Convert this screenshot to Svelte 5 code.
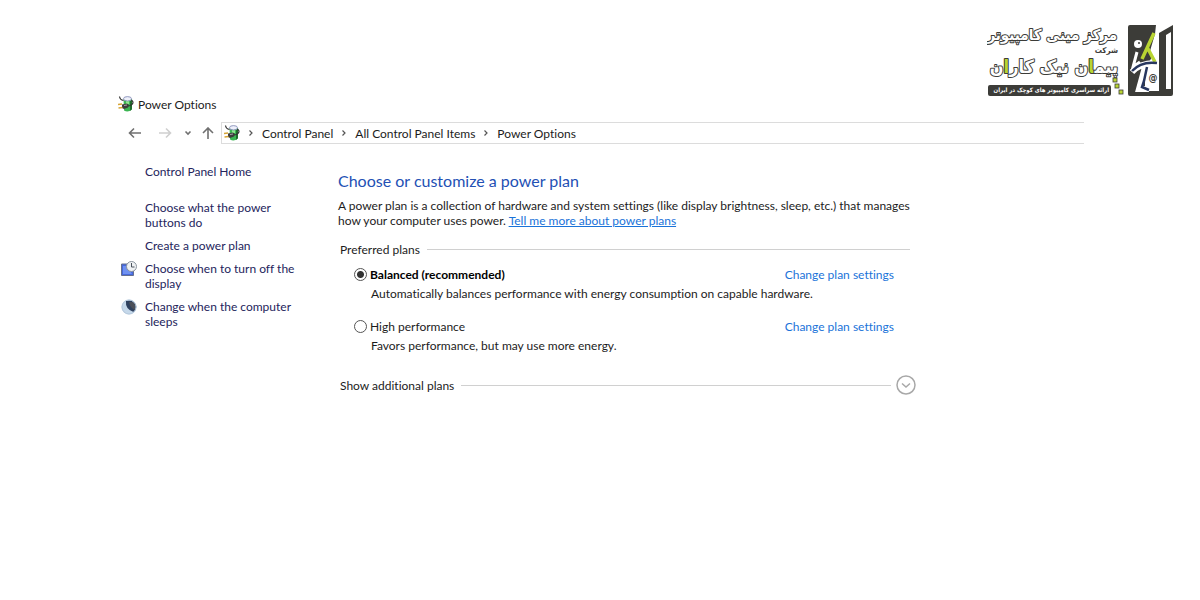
<script lang="ts">
  interface Task {
    label: string;
    icon?: "display" | "sleep";
  }

  const path = ["Control Panel", "All Control Panel Items", "Power Options"];

  const tasks: Task[] = [
    { label: "Choose what the power buttons do" },
    { label: "Create a power plan" },
    { label: "Choose when to turn off the display", icon: "display" },
    { label: "Change when the computer sleeps", icon: "sleep" },
  ];

  const plans = [
    {
      id: "balanced",
      name: "Balanced (recommended)",
      info: "Automatically balances performance with energy consumption on capable hardware.",
    },
    {
      id: "high",
      name: "High performance",
      info: "Favors performance, but may use more energy.",
    },
  ];

  let selected = $state("balanced");
</script>

{#snippet powerIcon()}
  <svg class="power-icon" viewBox="0 0 16 16" aria-hidden="true">
    <path d="M5.5 3 H14 V13.5 Q10 17 6 14.5 Z" fill="#3cb552" />
    <path d="M12 5 L14 4 V13 L12 15 Z" fill="#1f6d2c" />
    <path d="M8 5 H11 V8 H8 Z" fill="#8be88a" />
    <ellipse cx="9.5" cy="2.8" rx="4" ry="2.2" fill="#eef0fa" stroke="#7a83b0" stroke-width=".8" />
    <path d="M1.5 .5 Q2 4 5.5 4.5 M13.5 4 Q17 7 12.5 9.5 L10 10" fill="none" stroke="#333" stroke-width="1.2" />
    <path d="M4 8.5 L9 7.5 L11 9 L10 11.5 L6 13 L4 12 Z" fill="#3c3c3c" />
    <path d="M6 9.5 L9 9" stroke="#a5a5a5" />
    <path d="M0 8.5 L4 8 M.5 12 L4.5 11.5" stroke="#d6a536" stroke-width="1.6" />
  </svg>
{/snippet}

{#snippet chevron()}
  <svg class="chevron" viewBox="0 0 6 8" aria-hidden="true">
    <path d="M1.5 1.5 L4 4 L1.5 6.5" />
  </svg>
{/snippet}

<header>
  <a class="brand" href="/" aria-label="مرکز مینی کامپیوتر">
    <svg viewBox="0 0 186 71" direction="rtl">
      <g class="outlined">
        <text class="top" x="130" y="15">مرکز مینی کامپیوتر</text>
        <text class="name" x="131" y="48">پیم<tspan class="lime">ا</tspan>ن نیک کار<tspan class="lime">ا</tspan>ن</text>
      </g>
      <text class="company" x="131" y="28">شرکت</text>
      <rect x="1" y="60" width="123" height="11" rx="2" fill="#3c3c38" />
      <text class="tagline" x="122" y="67">ارائه سراسری کامپیوتر های کوچک در ایران</text>
      <g fill="#b9d532" stroke="#3c3c38" stroke-width=".8">
        <rect x="126" y="53" width="4" height="4" />
        <rect x="128" y="59" width="4" height="4" />
        <rect x="132" y="65" width="4" height="4" />
      </g>
      <path d="M143 0 H169 V7 L172 10 V8 L186 0 V69 Q186 71 184 71 H143 Q141 71 141 69 V2 Q141 0 143 0 Z" fill="#3c3c38" />
      <path d="M169 0 H172 V66 H158 V44 L165 32 L163 26 L168 9 Z" fill="#fff" />
      <path d="M179 10 L184 7 V64 H179 Z" fill="#fff" />
      <circle cx="151" cy="19" r="4" fill="#fff" />
      <circle cx="152" cy="18" r="1" fill="#3c3c38" />
      <path d="M150 27 L146 42 L153 37" fill="none" stroke="#fff" stroke-width="3" />
      <path d="M145 47 Q154 37 170 38 M158 42 L152 64 H162" fill="none" stroke="#fff" stroke-width="6" />
      <path d="M167 8 L155 34 M160 22 L168 37" fill="none" stroke="#b9d532" stroke-width="3.5" />
      <path d="M145 46 Q154 36 170 38 M160 42 L157 56 L155 62 L162 65" fill="none" stroke="#28375f" stroke-width="2.5" />
      <text class="at" x="166" y="56" direction="ltr">@</text>
    </svg>
  </a>
</header>

<main>
  <div class="title">
    {@render powerIcon()}
    <span>Power Options</span>
  </div>

  <nav class="toolbar" aria-label="Location">
    <button aria-label="Back">
      <svg viewBox="0 0 14 12"><path d="M13 6 H2 M6 1.5 L1.5 6 L6 10.5" /></svg>
    </button>
    <button class="disabled" aria-label="Forward" disabled>
      <svg viewBox="0 0 14 12"><path d="M1 6 H12 M8 1.5 L12.5 6 L8 10.5" /></svg>
    </button>
    <button class="recent" aria-label="Recent locations">
      <svg viewBox="0 0 8 12"><path d="M1.5 4.5 L4 7 L6.5 4.5" /></svg>
    </button>
    <button class="up" aria-label="Up">
      <svg viewBox="0 0 14 12"><path d="M7 12 V1.5 M2 6 L7 1 L12 6" /></svg>
    </button>
    <div class="address">
      {@render powerIcon()}
      {#each path as part}
        {@render chevron()}
        <a href="#{part}">{part}</a>
      {/each}
    </div>
  </nav>

  <div class="body">
    <aside>
      <a class="home" href="#home">Control Panel Home</a>
      <ul>
        {#each tasks as task}
          <li>
            {#if task.icon === "display"}
              <svg class="task-icon" viewBox="0 0 16 16" aria-hidden="true">
                <path d="M.5 3 H12.5 V14.5 H.5 Z" fill="#4668dc" stroke="#65708f" />
                <path d="M2 5 H6 L11 13 H2 Z" fill="#6f91f1" />
                <circle cx="10.5" cy="5.5" r="5" fill="#eef1f3" stroke="#8b949e" />
                <path d="M10.5 2 V6 H13.5" fill="none" stroke="#4b535d" />
              </svg>
            {:else if task.icon === "sleep"}
              <svg class="task-icon" viewBox="0 0 16 16" aria-hidden="true">
                <circle cx="8" cy="8" r="7.5" fill="#c5d8ea" />
                <path d="M5 2 Q4 10 12.5 13 Q16 10 15 6 Q12 0 5 2 Z" fill="#2e405e" />
                <path d="M8 3 Q9 9 14 11 Q15 5 12 3 Z" fill="#4b4f59" />
                <circle cx="8" cy="8" r="7" fill="none" stroke="#b5c8dc" />
              </svg>
            {/if}
            <a href="#task">{task.label}</a>
          </li>
        {/each}
      </ul>
    </aside>

    <section>
      <h1>Choose or customize a power plan</h1>
      <p>
        A power plan is a collection of hardware and system settings (like display brightness, sleep, etc.) that manages
        how your computer uses power. <a class="more" href="#more">Tell me more about power plans</a>
      </p>

      <fieldset>
        <legend><span>Preferred plans</span></legend>
        {#each plans as plan}
          <div class="plan">
            <input type="radio" id={plan.id} value={plan.id} bind:group={selected} />
            <label for={plan.id} class:selected={selected === plan.id}>{plan.name}</label>
            <a href="#{plan.id}">Change plan settings</a>
            <p>{plan.info}</p>
          </div>
        {/each}
      </fieldset>

      <button class="additional">
        <span>Show additional plans</span>
        <svg viewBox="0 0 20 20" aria-hidden="true">
          <circle cx="10" cy="10" r="9" />
          <path d="M6 8.5 L10 12 L14 8.5" />
        </svg>
      </button>
    </section>
  </div>
</main>

<style>
  :global(body) {
    margin: 0;
    background: #fff;
    color: #1c1c1c;
    font: 12px/15px "Segoe UI", Lato, "Open Sans", sans-serif;
    font-variant-ligatures: none;
  }

  a {
    color: inherit;
    text-decoration: none;
  }

  a:hover {
    text-decoration: underline;
  }

  button {
    padding: 0;
    border: 0;
    background: none;
    color: inherit;
    font: inherit;
    cursor: pointer;
  }

  svg {
    display: block;
    flex: none;
  }

  header {
    display: flex;
    justify-content: flex-end;
    padding: 25px 27px 0 0;
  }

  .brand svg {
    width: 186px;
    height: 71px;
  }

  .brand text {
    font-family: "DejaVu Sans Condensed", "DejaVu Sans", sans-serif;
    font-weight: bold;
    fill: #3c3c38;
  }

  .outlined text {
    fill: #fff;
    stroke: #3c3c38;
    stroke-width: 2px;
    stroke-linejoin: round;
    paint-order: stroke;
  }

  .outlined .lime {
    fill: #b9d532;
  }

  .brand .top {
    font-size: 15px;
  }

  .brand .name {
    font-size: 18px;
  }

  .brand .company {
    font-size: 8px;
  }

  .brand .tagline {
    font-size: 6px;
    fill: #fff;
  }

  .brand .at {
    font-size: 10px;
    text-anchor: middle;
  }

  main {
    padding: 0 116px 0 118px;
  }

  .title {
    display: flex;
    align-items: center;
    gap: 4px;
  }

  .power-icon {
    width: 16px;
    height: 16px;
  }

  .toolbar {
    display: flex;
    align-items: center;
    margin-top: 10px;
    padding-left: 10px;
  }

  .toolbar button {
    margin-right: 16px;
  }

  .toolbar button svg {
    width: 14px;
    height: 12px;
    fill: none;
    stroke: #707070;
    stroke-width: 1.6;
  }

  .toolbar .disabled svg {
    stroke: #cfcfcf;
  }

  .toolbar .recent {
    margin-right: 9px;
    margin-left: -4px;
  }

  .toolbar .recent svg {
    width: 8px;
  }

  .toolbar .up {
    margin-right: 6px;
  }

  .address {
    flex: 1;
    display: flex;
    align-items: center;
    height: 20px;
    padding-left: 2px;
    border: 1px solid #dcdcdc;
    border-right: 0;
  }

  .chevron {
    width: 6px;
    height: 8px;
    margin: 0 8px;
    fill: none;
    stroke: #555;
    stroke-width: 1.2;
  }

  .body {
    display: flex;
    margin-top: 20px;
  }

  aside {
    width: 193px;
    margin-right: 27px;
    color: #24245c;
  }

  .home {
    padding-left: 27px;
  }

  ul {
    display: grid;
    gap: 8px;
    margin: 21px 0 0;
    padding: 0;
    list-style: none;
  }

  li {
    position: relative;
    padding: 0 16px 0 27px;
  }

  .task-icon {
    position: absolute;
    left: 3px;
    top: 0;
    width: 16px;
    height: 16px;
  }

  section {
    flex: 1;
    max-width: 578px;
  }

  h1 {
    margin: 7px 0;
    color: #2350b4;
    font-size: 16px;
    font-weight: normal;
    line-height: 20px;
  }

  p {
    margin: 0;
  }

  .more {
    color: #1a73d9;
    text-decoration: underline;
  }

  fieldset {
    margin: 14px 6px 0 2px;
    padding: 0;
    border: 0;
  }

  legend {
    display: flex;
    align-items: center;
    gap: 7px;
    width: 100%;
    padding: 0;
  }

  legend::after,
  .additional span::after {
    content: "";
    flex: 1;
    height: 1px;
    background: #d0d0d0;
  }

  .plan {
    display: grid;
    grid-template-columns: 13px 1fr auto;
    align-items: center;
    gap: 4px 3px;
    margin-top: 10px;
    padding: 0 16px 8px 14px;
  }

  .plan input {
    appearance: none;
    width: 13px;
    height: 13px;
    margin: 0;
    border: 1px solid #555;
    border-radius: 50%;
  }

  .plan input:checked {
    background: radial-gradient(circle, #333 3px, #fff 4px);
  }

  .plan label.selected {
    color: #000;
    font-weight: bold;
  }

  .plan a {
    color: #1a73d9;
  }

  .plan p {
    grid-column: 2 / -1;
    padding-left: 1px;
  }

  .additional {
    display: flex;
    align-items: center;
    gap: 5px;
    width: 100%;
    margin-top: 14px;
    padding-left: 2px;
  }

  .additional span {
    flex: 1;
    display: flex;
    align-items: center;
    gap: 7px;
  }

  .additional svg {
    width: 20px;
    height: 20px;
    fill: none;
    stroke: #a8a8a8;
    stroke-width: 1.5;
  }
</style>
